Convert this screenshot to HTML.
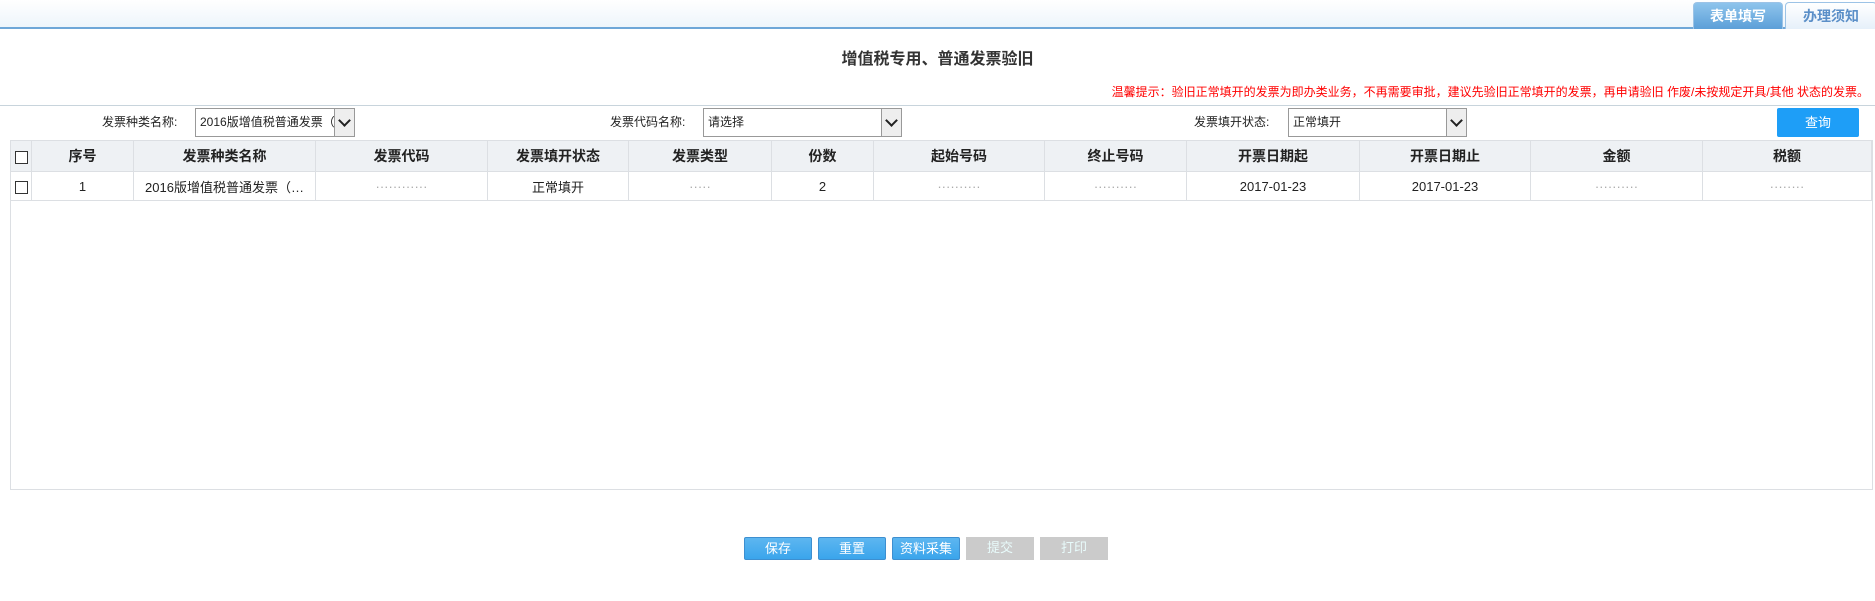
<!DOCTYPE html>
<html><head><meta charset="utf-8"><style>
*{margin:0;padding:0;box-sizing:border-box}
body{width:1875px;height:601px;background:#fff;font-family:"Liberation Sans","Noto Sans CJK SC",sans-serif;position:relative;overflow:hidden;font-size:13px;color:#222}
.a{position:absolute}
.top{left:0;top:0;width:1875px;height:29px;background:linear-gradient(#fff,#eef5fb);border-bottom:2px solid #6fa7d8}
.tab{top:2px;height:27px;border:1px solid #9cc3e6;border-bottom:none;border-radius:4px 4px 0 0;font-weight:bold;font-size:14px;text-align:center;line-height:26px}
.sel{height:29px;border:1px solid #999;background:#fff;font-size:12px;line-height:27px;padding-left:4px}
.sel b{position:absolute;right:0;top:0;width:20px;height:27px;border-left:1px solid #999;background:#eee}
.sel b:after{content:"";position:absolute;left:5px;top:7px;width:7px;height:7px;border-right:2px solid #222;border-bottom:2px solid #222;transform:rotate(45deg)}
.lbl{font-size:12px;line-height:29px}
table{border-collapse:collapse;table-layout:fixed}
td{border:1px solid #dcdfe3;text-align:center;font-size:13px;height:29px;white-space:nowrap;overflow:hidden}
thead td{background:#eef1f4;font-weight:bold;font-size:14px;height:31px}
.cb{display:inline-block;width:13px;height:13px;border:1px solid #333;background:#fff;vertical-align:middle}
.btn{top:537px;height:23px;width:68px;color:#fff;text-align:center;line-height:22px;font-size:13px}
.bb{background:linear-gradient(#5db6f0,#3aa5ec);border:1px solid #3d8fd0;border-radius:2px}
.bg{background:#cbcbcb;color:#e8fbfb}
</style></head><body>
<div class="a top"></div>
<div class="a tab" style="left:1693px;width:90px;background:linear-gradient(#8ec4ec,#5c9fd8);color:#fff">表单填写</div>
<div class="a tab" style="left:1785px;width:92px;background:linear-gradient(#fff,#e6f0fa);color:#5b8fc8">办理须知</div>
<div class="a" style="left:0;width:1875px;top:45px;text-align:center;font-size:16px;font-weight:bold;color:#333">增值税专用、普通发票验旧</div>
<div class="a" style="right:6px;top:83px;font-size:12px;color:#f00">温馨提示：验旧正常填开的发票为即办类业务，不再需要审批，建议先验旧正常填开的发票，再申请验旧 作废/未按规定开具/其他 状态的发票。</div>
<div class="a" style="left:0;top:105px;width:1875px;border-top:1px solid #c8d4dc"></div>
<div class="a lbl" style="left:102px;top:108px">发票种类名称:</div>
<div class="a sel" style="left:195px;top:108px;width:160px">2016版增值税普通发票（:<b></b></div>
<div class="a lbl" style="left:610px;top:108px">发票代码名称:</div>
<div class="a sel" style="left:703px;top:108px;width:199px">请选择<b></b></div>
<div class="a lbl" style="left:1194px;top:108px">发票填开状态:</div>
<div class="a sel" style="left:1288px;top:108px;width:179px">正常填开<b></b></div>
<div class="a" style="left:1777px;top:108px;width:82px;height:29px;background:#1e9ef7;border-radius:2px;color:#fff;text-align:center;line-height:29px;font-size:13px">查询</div>
<div class="a" style="left:10px;top:140px;width:1863px;height:350px;border:1px solid #dcdfe3"></div>
<table class="a" style="left:10px;top:140px;width:1862px">
<colgroup><col style="width:21px"><col style="width:102px"><col style="width:182px"><col style="width:172px"><col style="width:141px"><col style="width:143px"><col style="width:102px"><col style="width:171px"><col style="width:142px"><col style="width:173px"><col style="width:171px"><col style="width:172px"><col></colgroup>
<thead><tr><td><span class="cb"></span></td><td>序号</td><td>发票种类名称</td><td>发票代码</td><td>发票填开状态</td><td>发票类型</td><td>份数</td><td>起始号码</td><td>终止号码</td><td>开票日期起</td><td>开票日期止</td><td>金额</td><td>税额</td></tr></thead>
<tr><td><span class="cb"></span></td><td>1</td><td>2016版增值税普通发票（…</td><td style="color:#aaa">············</td><td>正常填开</td><td style="color:#aaa">·····</td><td>2</td><td style="color:#aaa">··········</td><td style="color:#aaa">··········</td><td>2017-01-23</td><td>2017-01-23</td><td style="color:#aaa">··········</td><td style="color:#aaa">········</td></tr>
</table>
<div class="a btn bb" style="left:744px">保存</div>
<div class="a btn bb" style="left:818px">重置</div>
<div class="a btn bb" style="left:892px">资料采集</div>
<div class="a btn bg" style="left:966px">提交</div>
<div class="a btn bg" style="left:1040px">打印</div>
</body></html>
